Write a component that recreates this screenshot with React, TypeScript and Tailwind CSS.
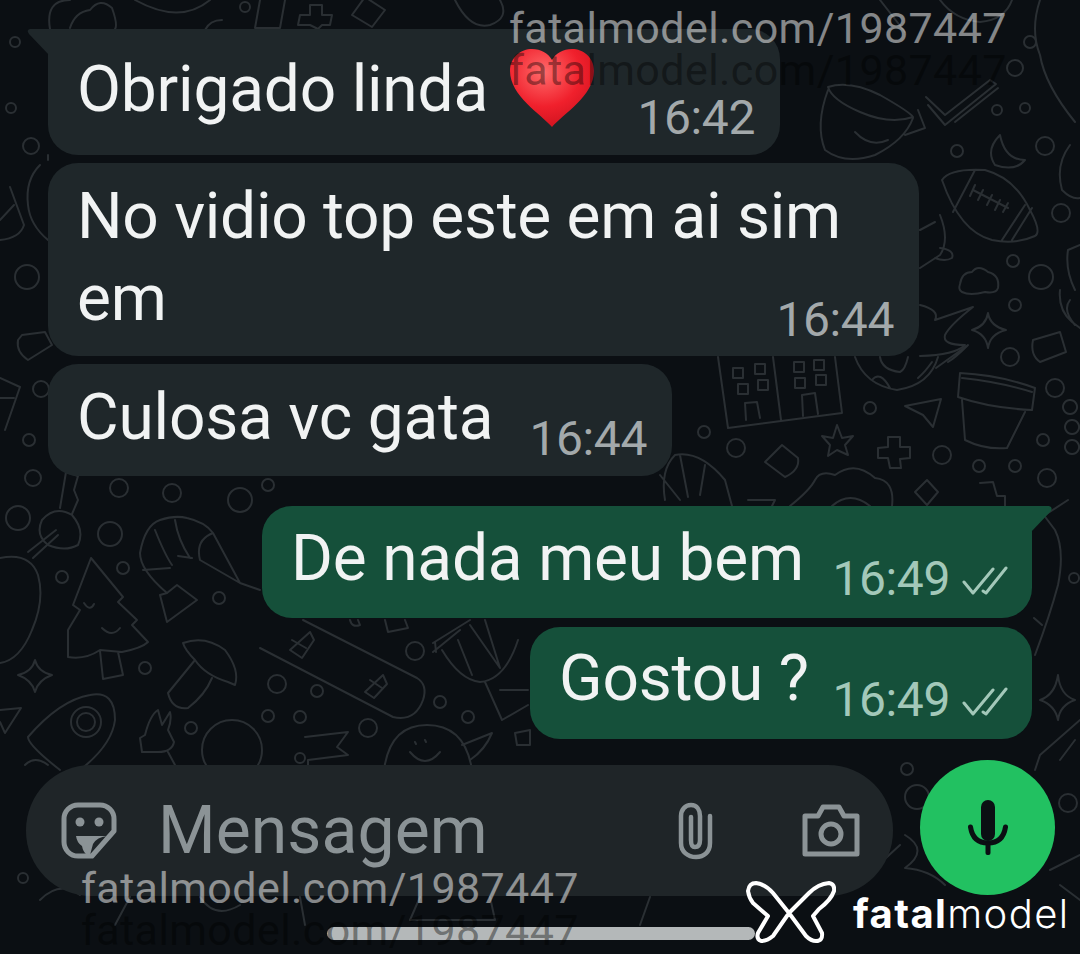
const circles: [number, number, number][] = [
  [33, 478, 8], [18, 518, 12], [119, 488, 9], [172, 493, 9], [240, 500, 12], [268, 485, 6],
  [110, 534, 12], [123, 568, 6], [62, 577, 6], [219, 598, 6], [145, 668, 6], [268, 716, 6],
  [191, 728, 6], [415, 651, 9], [277, 684, 9], [317, 691, 6], [300, 717, 6], [368, 728, 9],
  [440, 702, 6], [468, 717, 6], [1010, 357, 9], [1055, 388, 9], [870, 408, 6], [704, 432, 6],
  [736, 448, 9], [942, 455, 9], [1043, 440, 6], [979, 466, 6], [1015, 466, 6], [1047, 478, 9],
  [957, 151, 6], [1045, 146, 9], [1061, 213, 9], [1013, 261, 6], [1041, 277, 12], [1015, 305, 6],
  [27, 277, 12], [31, 146, 8], [41, 389, 8], [29, 440, 6], [1030, 42, 6], [997, 110, 5],
  [1025, 108, 5], [1015, 68, 8], [15, 42, 5], [11, 108, 5], [245, 7, 5], [23, 878, 5],
  [907, 769, 6], [917, 797, 12], [1068, 803, 9], [1074, 578, 5], [86, 722, 15], [86, 722, 9],
  [232, 750, 30], [300, 758, 5],
]

const doodles = [
  // left column
  'M0 558 Q30 552 38 575 Q45 600 32 630 Q20 660 0 663',
  'M42 520 Q55 505 72 515 Q85 530 78 545 Q65 552 48 545 Q35 535 42 520 M60 508 L66 472 L78 476 L74 490 L78 500 L72 514',
  'M33 558 L58 535 M28 552 L56 530',
  'M35 660 Q38 672 52 675 Q38 680 35 692 Q32 680 18 675 Q32 672 35 660Z',
  'M10 187 L24 225 Q20 238 0 240 M0 220 L14 205',
  'M22 335 L45 332 L52 345 L28 360 Q16 352 18 340Z',
  'M0 378 L20 387 L5 430 M0 398 L14 398',
  'M0 710 L21 708 L5 733 L0 722',
  // tree
  'M91 558 L123 597 L118 602 L137 620 L132 625 L148 642 Q142 648 122 652 L100 650 Q85 660 68 657 L68 630 L80 610 L73 605Z M100 651 L103 679 L123 675 L118 652 M84 603 Q90 612 94 604 M102 628 Q112 638 120 628',
  // shrimp
  'M140 553 Q145 525 160 520 Q175 515 187 518 Q205 522 213 533 L240 583 L260 590 M140 553 Q140 570 167 593 L160 595 L167 622 L197 600 L177 585 L167 593 M143 570 L170 568 M155 530 Q165 555 172 565 M175 520 Q178 540 190 558 M213 533 Q195 540 200 560 L240 583 M178 556 L192 558',
  // mushroom
  'M183 643 Q205 635 225 650 Q240 670 235 685 L228 682 Q205 675 195 660 Q185 650 183 643Z M195 660 L168 693 Q172 710 188 708 Q205 695 212 678',
  // rocket, hand
  'M28 737 Q60 700 90 695 Q115 690 115 720 Q112 745 80 770 M28 737 Q28 745 60 770 M25 765 Q35 755 48 765',
  'M145 735 Q150 715 158 710 L162 725 L170 712 Q172 720 168 730 L174 742 Q172 752 158 752 L142 752 L140 738 L145 735 M168 752 L175 765',
  // snowboard, drum
  'M260 648 L393 717 Q415 722 423 700 Q428 685 417 678 L303 620',
  'M290 650 L310 632 L314 640 L302 658Z M292 640 L306 648 M365 692 L383 675 L387 684 L374 698Z M370 680 L382 688',
  'M433 643 L470 620 M436 652 L435 642 M433 652 L460 630 M442 650 Q460 680 480 682 Q505 680 518 640 M458 640 L472 675 M470 625 L500 668 M485 620 L500 668 M485 682 L502 720 L528 705 M500 690 L528 690',
  'M305 737 L348 732 L337 747 L348 755 L308 760 L308 765',
  'M384 770 Q390 725 427 725 Q465 725 472 770 M410 752 Q425 770 440 752 M415 742 L416 744 M425 740 L426 742 M462 745 L492 733 Q485 750 470 760',
  'M515 733 L530 730 L530 745 L517 745Z M385 620 L388 632 L408 628 L405 620 M350 620 Q352 628 360 625 L358 620',
  // cup, checks, moon, top right
  'M828 87 Q850 80 880 95 Q910 112 913 117 Q890 125 860 112 Q832 100 828 87Z M828 90 Q815 125 825 150 Q845 165 875 155 Q905 140 913 118 M905 135 L925 128 L918 110 M855 132 Q870 148 888 140',
  'M926 97 L945 115 L990 80 L996 84 L945 125 L928 105 M955 122 L998 88',
  'M1000 135 Q985 150 995 165 Q1015 172 1025 160 Q1005 160 1000 135Z',
  'M1040 0 Q1030 30 1040 55 Q1045 85 1075 122',
  'M940 0 Q955 20 980 22 Q1005 20 1012 0 M880 0 L905 32 M1070 145 Q1055 165 1062 190 Q1072 200 1080 198',
  // football
  'M942 180 Q950 168 985 170 Q1015 178 1030 210 Q1042 232 1035 236 Q1015 245 992 240 Q960 232 942 180Z M953 212 L975 170 M1002 240 L1025 205 M1012 240 L1032 208 M973 190 L1008 208 M975 185 L970 196 M983 190 L978 200 M992 195 L987 205 M1000 200 L995 210 M1008 203 L1003 212',
  'M940 215 Q950 240 940 255 L920 268 M920 230 L935 222 M940 248 Q955 250 952 258 Q945 262 935 258',
  'M960 284 Q962 272 972 272 Q978 264 988 272 Q1000 275 998 288 Q996 294 985 292 Q970 296 962 292 Q958 290 960 284Z',
  'M988 313 Q990 326 1006 330 Q990 334 988 348 Q986 334 972 330 Q986 326 988 313Z',
  'M1033 340 L1060 332 L1066 352 L1040 362 Q1030 355 1033 340Z',
  'M1060 290 Q1058 310 1072 322 L1080 328 M1070 300 Q1062 310 1075 325 M1080 245 L1068 250 Q1065 270 1075 290',
  'M920 305 Q940 310 935 320 L973 307 Q950 325 945 335 Q942 345 965 345 Q955 355 920 356',
  // building, globe, pot
  'M718 357 L728 428 L842 413 L835 357 M773 357 L781 420 M746 420 L745 403 L757 402 L760 418 M803 416 L802 395 L815 393 L818 414',
  'M733 368 h10 v10 h-10z M755 364 h10 v10 h-10z M738 384 h10 v10 h-10z M758 380 h10 v10 h-10z M794 362 h10 v10 h-10z M814 360 h10 v10 h-10z M795 378 h10 v10 h-10z M816 375 h10 v10 h-10z',
  'M855 357 Q865 385 897 390 Q930 385 938 357 M880 357 Q882 370 900 372 Q905 370 908 357 M872 380 Q880 370 890 388 M918 378 Q925 372 932 362 M936 368 L968 345 Q955 358 948 362',
  'M960 373 Q1000 375 1035 388 L1032 410 Q990 408 958 397Z M962 378 Q1000 382 1032 392 M962 400 L965 440 Q985 450 1007 448 L1025 412',
  'M905 406 L941 399 L933 427 L923 415Z',
  'M837 425 L842 438 L853 436 L845 445 L848 455 L837 450 L828 456 L830 445 L822 436 L833 438Z',
  'M888 437 L900 437 L900 447 L910 447 L910 458 L900 459 L901 468 L890 468 L888 458 L878 458 L878 448 L888 447Z',
  'M782 445 L798 458 Q800 470 785 477 L765 462Z',
  'M927 480 L938 492 L927 505 L915 492Z',
  'M980 483 L993 482 L997 496 L1005 496 L1005 506',
  'M665 500 Q660 470 675 455 Q700 450 725 480 L732 506 M680 455 L688 497 M705 465 L700 495 M660 475 L680 500',
  'M790 506 Q810 490 815 480 Q820 470 835 475 Q855 460 875 478 Q895 480 892 506 M832 506 Q850 490 870 506 M748 500 L775 500 L772 506',
  'M1070 400 a7 7 0 1 0 .1 0 M1072 420 a7 7 0 1 0 .1 0 M1072 440 a7 7 0 1 0 .1 0',
  // right column under the bubbles
  'M1040 510 L1055 530 Q1065 550 1058 585 Q1050 615 1035 655 M1045 515 L1068 500 M1034 618 L1042 625',
  'M1058 675 Q1060 695 1075 700 Q1060 705 1058 720 Q1055 705 1040 700 Q1055 695 1058 675Z',
  'M1080 720 L1040 755 L1035 770 M1060 760 L1075 740',
  'M905 835 Q930 850 905 868 Q930 870 945 885 M875 868 L900 845 M1050 870 L1080 855 M1060 885 L1080 900',
  // top strip
  'M50 29 Q45 0 70 0 M70 28 Q75 12 90 10 Q100 -3 112 8 Q118 25 115 29 M135 0 Q180 25 210 0',
  'M205 30 Q210 20 222 20 M260 0 L255 28 L280 28 L285 0',
  'M310 5 L322 5 L322 15 L332 15 L330 25 L322 25 L318 29 L310 25 L298 25 L300 15 L310 15Z M365 -3 L385 10 L372 27 L352 15Z',
  'M455 0 Q470 30 490 25 Q510 18 500 0',
  'M48 155 L48 160 M40 165 Q25 180 28 205 Q30 225 48 240',
  // under the input
  'M40 900 Q60 880 80 895 M130 897 L115 925 M200 897 Q215 920 240 905 M300 897 L305 925 M420 897 L410 920 L495 920 L490 897 M650 897 L640 925',
]

function Doodles() {
  return (
    <svg className="absolute inset-0" width="1080" height="954" viewBox="0 0 1080 954" fill="none" stroke="#2a2f33" strokeWidth="2" strokeLinejoin="round" strokeLinecap="round">
      {circles.map(([x, y, r], i) => <circle key={i} cx={x} cy={y} r={r} />)}
      {doodles.map((d, i) => <path key={i} d={d} />)}
    </svg>
  )
}

function Ticks() {
  return (
    <svg width="46" height="30" viewBox="0 0 46 30" fill="none" stroke="#a3c8b9" strokeWidth="3" strokeLinecap="round" strokeLinejoin="round">
      <path d="M2 16 L11 27 L31 3" />
      <path d="M21 25 L24 27 L44 2" />
    </svg>
  )
}

function Heart() {
  return (
    <svg width="86" height="80" viewBox="0 0 86 80">
      <defs>
        <radialGradient id="heartFill" cx="0.4" cy="0.3" r="0.8">
          <stop offset="0" stopColor="#ff6b6b" />
          <stop offset="0.55" stopColor="#f0202c" />
          <stop offset="1" stopColor="#c8101c" />
        </radialGradient>
      </defs>
      <path d="M43 79 C32 66 1 48 1 23 C1 9 12 1 23 1 C32 1 39 5 43 12 C47 5 54 1 63 1 C74 1 85 9 85 23 C85 48 54 66 43 79Z" fill="url(#heartFill)" />
    </svg>
  )
}

function Sticker() {
  return (
    <svg width="56" height="57" viewBox="0 0 56 57" fill="none" stroke="#8b9396" strokeWidth="5">
      <path d="M17 3 H39 A14 14 0 0 1 53 17 V29 L31 54 H17 A14 14 0 0 1 3 40 V17 A14 14 0 0 1 17 3Z" strokeLinejoin="round" />
      <circle cx="19" cy="20" r="4.5" fill="#8b9396" stroke="none" />
      <circle cx="38" cy="20" r="4.5" fill="#8b9396" stroke="none" />
      <path d="M15 34 H46 Q36 35 32 42 L29 53 L26 53 Q22 50 21 44 Q16 41 15 34Z" fill="#8b9396" stroke="none" />
    </svg>
  )
}

function Clip() {
  return (
    <svg width="36" height="58" viewBox="0 0 36 58" fill="none" stroke="#8b9396" strokeWidth="4.5" strokeLinecap="round">
      <path d="M32 14 V41 C32 50 26 55 18 55 C10 55 3 50 3 41 V14 C3 8 7 3 13 3 C19 3 22 8 22 14 V38 C22 43 20 45 17 45 C14 45 13 43 13 38 V15" />
    </svg>
  )
}

function Camera() {
  return (
    <svg width="58" height="53" viewBox="0 0 58 53" fill="none" stroke="#8b9396" strokeWidth="5" strokeLinejoin="round">
      <path d="M3 12 H16 L21 3 H37 L42 12 H55 V50 H3Z" />
      <circle cx="29" cy="30" r="10" />
    </svg>
  )
}

function Mic() {
  return (
    <svg width="40" height="55" viewBox="0 0 40 55" fill="none">
      <rect x="13" y="0" width="14" height="41" rx="7" fill="#0b0f13" />
      <path d="M2.5 27 Q5 43 20 43 Q35 43 37.5 27" stroke="#0b0f13" strokeWidth="5" strokeLinecap="round" />
      <rect x="17.5" y="42" width="5" height="13" rx="2" fill="#0b0f13" />
    </svg>
  )
}

function Logo() {
  return (
    <svg width="90" height="63" viewBox="0 0 90 63" fill="none" stroke="#ffffff" strokeWidth="4" strokeLinejoin="round">
      <path d="M2 10 Q3 2 10 2 Q19 3 27 12 L43 32 L63 12 Q72 3 83 2 Q89 3 88 10 Q85 19 73 28 L67 35 L76 52 Q77 60 70 60 Q65 60 60 55 L43 32 L27 55 Q21 60 15 60 Q10 58 12 52 L22 35 L7 22 Q3 17 2 10Z" />
    </svg>
  )
}

export default function App() {
  return (
    <div className="relative w-[1080px] h-[954px] overflow-hidden bg-[#0b0f13] font-['Roboto',sans-serif]">
      <Doodles />

      <div className="relative flex flex-col items-start pt-[29px]">
        {/* mensagens recebidas */}
        <div className="relative ml-[48px] w-[732px] h-[126px] rounded-[30px] rounded-tl-none bg-[#1f272a] flex pl-[29px] pr-[25px]">
          <svg className="absolute -left-[21px] top-0" width="22" height="26" viewBox="0 0 22 26">
            <path d="M22 0 H3 Q-1 1 2 5 L22 26Z" fill="#1f272a" />
          </svg>
          <span className="text-[64px] leading-[70px] mt-[26px] tracking-[-0.2px] text-[#f1f3f3]">Obrigado linda</span>
          <span className="ml-[21px] mt-[19px]"><Heart /></span>
          <span className="ml-auto self-end mb-[9px] text-[48px] leading-[56px] tracking-[-0.4px] text-[#a3a9ab]">16:42</span>
        </div>

        <div className="mt-[8px] ml-[48px] w-[871px] h-[193px] rounded-[30px] bg-[#1f272a] relative pl-[29px] pt-[13px]">
          <p className="text-[64px] leading-[82px] tracking-[-0.3px] text-[#f1f3f3]">No vidio top este em ai sim<br />em</p>
          <span className="absolute right-[25px] bottom-[8px] text-[48px] leading-[56px] tracking-[-0.4px] text-[#a3a9ab]">16:44</span>
        </div>

        <div className="mt-[8px] ml-[48px] w-[624px] h-[112px] rounded-[30px] bg-[#1f272a] flex pl-[29px] pr-[25px]">
          <span className="mt-[19px] text-[64px] leading-[70px] tracking-[-0.2px] text-[#f1f3f3]">Culosa vc gata</span>
          <span className="ml-auto self-end mb-[9px] text-[48px] leading-[56px] tracking-[-0.4px] text-[#a3a9ab]">16:44</span>
        </div>

        {/* mensagens enviadas */}
        <div className="relative mt-[30px] ml-[262px] w-[770px] h-[112px] rounded-[30px] rounded-tr-none bg-[#15503a] flex pl-[29px] pr-[24px]">
          <svg className="absolute -right-[21px] top-0" width="22" height="26" viewBox="0 0 22 26">
            <path d="M0 0 H18 Q22 1 20 5 L0 26Z" fill="#15503a" />
          </svg>
          <span className="mt-[18px] text-[64px] leading-[70px] tracking-[-0.2px] text-[#f1f3f3]">De nada meu bem</span>
          <span className="ml-auto self-end mb-[11px] text-[48px] leading-[56px] tracking-[-0.4px] text-[#a3c8b9]">16:49</span>
          <span className="ml-[12px] self-end mb-[22px]"><Ticks /></span>
        </div>

        <div className="mt-[9px] ml-[530px] w-[502px] h-[112px] rounded-[30px] bg-[#15503a] flex pl-[29px] pr-[24px]">
          <span className="mt-[17px] text-[64px] leading-[70px] tracking-[-0.2px] text-[#f1f3f3]">Gostou ?</span>
          <span className="ml-auto self-end mb-[11px] text-[48px] leading-[56px] tracking-[-0.4px] text-[#a3c8b9]">16:49</span>
          <span className="ml-[12px] self-end mb-[22px]"><Ticks /></span>
        </div>

        {/* barra de entrada */}
        <div className="mt-[21px] ml-[26px] flex items-start">
          <div className="mt-[5px] w-[867px] h-[131px] rounded-[65px] bg-[#1f2528] flex items-center pl-[35px] pr-[33px]">
            <Sticker />
            <span className="ml-[41px] text-[66px] leading-[76px] tracking-[0.1px] text-[#8b9396]">Mensagem</span>
            <span className="ml-auto"><Clip /></span>
            <span className="ml-[88px]"><Camera /></span>
          </div>
          <button className="ml-[27px] w-[135px] h-[135px] rounded-full bg-[#22c161] flex items-center justify-center">
            <Mic />
          </button>
        </div>

        {/* barra de navegação */}
        <div className="mt-[31px] ml-[327px] w-[428px] h-[13px] rounded-full bg-[#b4b8b9]" />
      </div>

      {/* marcas d'água */}
      <span className="absolute left-[509px] top-[3px] text-[43px] leading-[50px] tracking-[0.4px] text-white/50">fatalmodel.com/1987447</span>
      <span className="absolute left-[509px] top-[45px] text-[43px] leading-[50px] tracking-[0.4px] text-black/40">fatalmodel.com/1987447</span>
      <span className="absolute left-[81px] top-[863px] text-[43px] leading-[50px] tracking-[0.4px] text-white/50">fatalmodel.com/1987447</span>
      <span className="absolute left-[81px] top-[905px] text-[43px] leading-[50px] tracking-[0.4px] text-black/40">fatalmodel.com/1987447</span>

      <span className="absolute left-[746px] top-[881px]"><Logo /></span>
      <span className="absolute left-[853px] top-[891px] font-['Inter',sans-serif] text-[40px] leading-[46px] tracking-[1.4px] text-white">
        <b className="font-bold">fatal</b><span className="font-light">model</span>
      </span>
    </div>
  )
}
